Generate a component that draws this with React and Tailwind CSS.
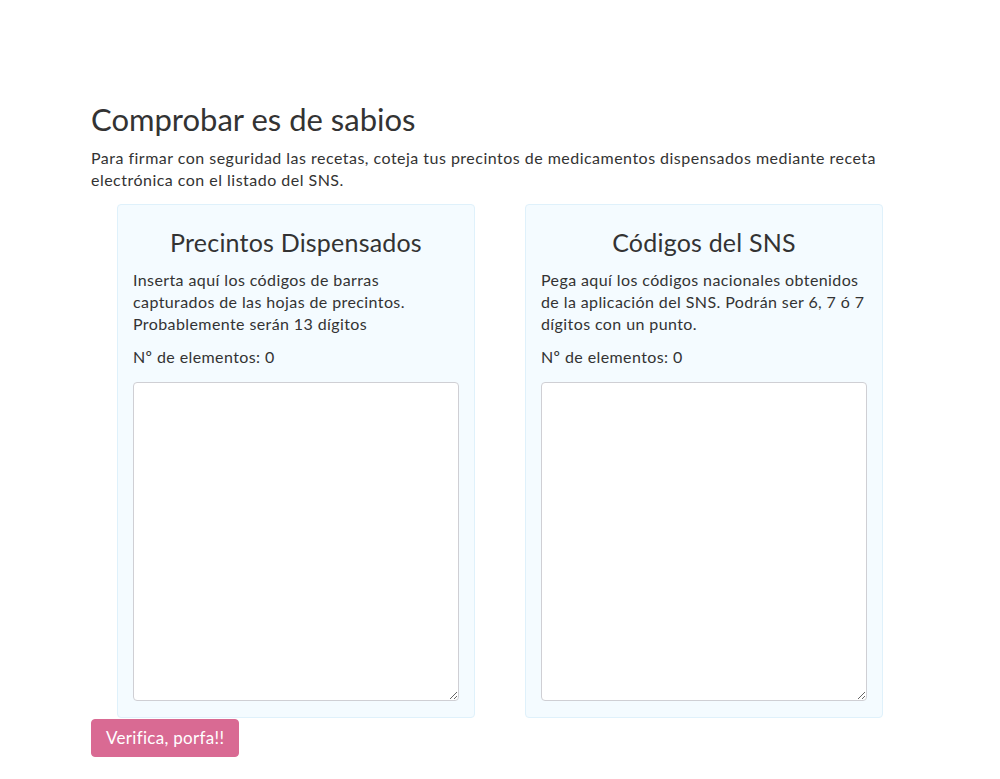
import { useState } from "react";

const Panel = ({ title, text }) => {
    const [value, setValue] = useState("");
    const count = value.split("\n").filter((l) => l.trim() !== "").length;

    return (
        <div className="w-[358px] bg-[#f4fbff] border border-[#dff1fb] rounded-[4px] px-[15px] pt-[15px] pb-[16px]">
            <h3 className="text-center text-[25px] leading-[30px] tracking-[0.2px] text-[#333] mt-[7px] mb-[12px]">{title}</h3>
            <p className="text-[16px] leading-[22px] tracking-[0.4px] text-[#333] mb-[11px]">{text}</p>
            <p className="text-[16px] leading-[22px] tracking-[0.4px] text-[#333] mb-[14px]">Nº de elementos: {count}</p>
            <textarea
                value={value}
                onChange={(e) => setValue(e.target.value)}
                className="block w-full h-[319px] bg-white border border-[#cfcfd4] rounded-[4px] p-2 text-[16px] outline-none"
            />
        </div>
    );
};

export default function App() {
    return (
        <div className="min-h-screen bg-white font-['Lato','Noto_Sans',sans-serif] text-[#333]">
            <div className="w-[818px] mx-auto pt-[100px]">
                <h2 className="text-[31px] leading-[38px] text-[#333] mb-[9px]">Comprobar es de sabios</h2>
                <p className="text-[16px] leading-[22px] tracking-[0.48px] mb-[13px]">
                    Para firmar con seguridad las recetas, coteja tus precintos de medicamentos dispensados mediante receta electrónica con el listado del SNS.
                </p>
                <div className="flex justify-center gap-[50px]">
                    <Panel
                        title="Precintos Dispensados"
                        text="Inserta aquí los códigos de barras capturados de las hojas de precintos. Probablemente serán 13 dígitos"
                    />
                    <Panel
                        title="Códigos del SNS"
                        text="Pega aquí los códigos nacionales obtenidos de la aplicación del SNS. Podrán ser 6, 7 ó 7 dígitos con un punto."
                    />
                </div>
                <button className="mt-[1px] h-[38px] px-[14px] bg-[#d96a93] text-white text-[17px] tracking-[0.3px] rounded-[4px] border border-[#d96a93]">
                    Verifica, porfa!!
                </button>
            </div>
        </div>
    );
}
